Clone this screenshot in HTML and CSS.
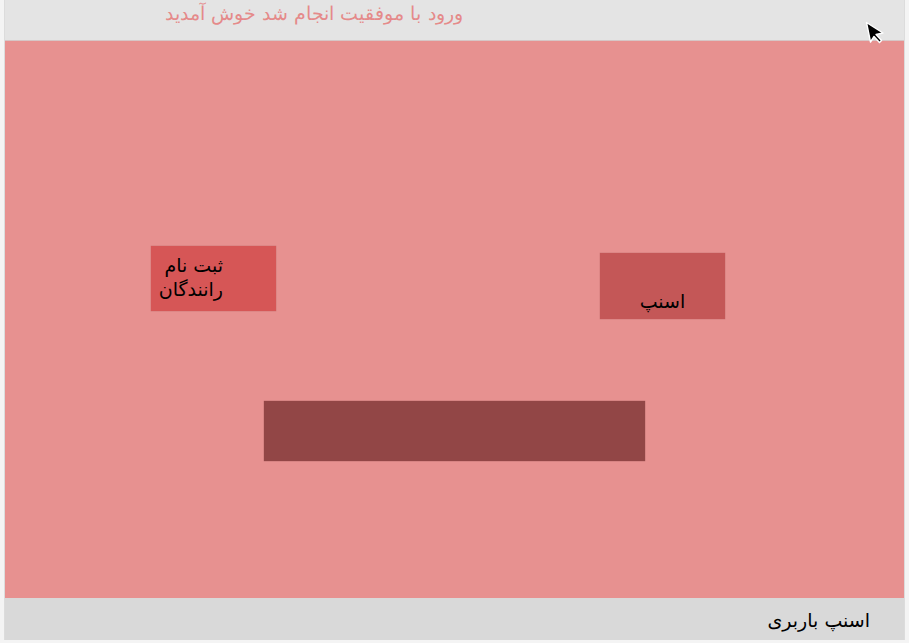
FILE: index.html
```html
<!DOCTYPE html>
<html lang="fa">
<head>
<meta charset="utf-8">
<link rel="stylesheet" href="styles.css">
</head>
<body>
<div class="window">
  <header class="topbar">
    <span class="welcome" dir="rtl">ورود با موفقیت انجام شد خوش آمدید</span>
    <svg class="cursor" width="22" height="24" viewBox="0 0 22 24">
      <path d="M1.5 1.5 L5.5 21 L9 15.5 L14.5 21.5 L16.5 19.5 L11 13.5 L18 12 Z" fill="#000" stroke="#fff" stroke-width="1.4" stroke-linejoin="round"/>
    </svg>
  </header>
  <main class="main">
    <div class="row">
      <div class="btn btn-register" dir="rtl">ثبت نام<br>رانندگان</div>
      <div class="btn btn-snapp" dir="rtl">اسنپ</div>
    </div>
    <div class="bar"></div>
  </main>
  <footer class="bottombar">
    <span class="title" dir="rtl">اسنپ باربری</span>
  </footer>
</div>
</body>
</html>
```

FILE: styles.css
```css
html, body {
  margin: 0;
  padding: 0;
  background: #f4f4f4;
}
body {
  font-family: "DejaVu Sans", "Noto Sans", sans-serif;
}
.window {
  margin-left: 4px;
  width: 899px;
  height: 640px;
  border-left: 1px solid #dcdcdc;
  border-right: 1px solid #dcdcdc;
  display: flex;
  flex-direction: column;
}
.topbar {
  position: relative;
  height: 41px;
  background: #e4e4e4;
  border-bottom: 1px solid #d6c6c6;
  box-sizing: border-box;
  display: flex;
  align-items: flex-start;
  padding-left: 160px;
}
.welcome {
  color: #e58a8a;
  font-size: 19.2px;
  line-height: 28px;
  font-weight: 300;
}
.cursor {
  position: absolute;
  left: 860px;
  top: 21px;
}
.main {
  height: 557px;
  background: #e79190;
  display: flex;
  flex-direction: column;
}
.row {
  display: flex;
  align-items: flex-start;
  padding-left: 146px;
  margin-top: 205px;
}
.btn {
  width: 125px;
  height: 65px;
  box-sizing: border-box;
  font-size: 19px;
  color: #000;
  box-shadow: 0 0 1px rgba(120, 40, 40, 0.5);
}
.btn-register {
  background: #d65656;
  padding-top: 7px;
  line-height: 24px;
  text-align: right;
  direction: rtl;
  padding-right: 53px;
  padding-left: 0;
}
.btn-snapp {
  background: #c45757;
  margin-left: 324px;
  margin-top: 7px;
  height: 66px;
  display: flex;
  align-items: flex-end;
  justify-content: center;
  padding-bottom: 7px;
}
.bar {
  margin-left: 259px;
  margin-top: 82px;
  width: 381px;
  height: 60px;
  background: #924646;
  box-shadow: 0 0 1px rgba(80, 20, 20, 0.6);
}
.bottombar {
  flex: 1;
  background: #d9d9d9;
  display: flex;
  justify-content: flex-end;
  align-items: center;
  padding-right: 34px;
}
.title {
  font-size: 19px;
  color: #000;
  margin-top: 1px;
}
```
